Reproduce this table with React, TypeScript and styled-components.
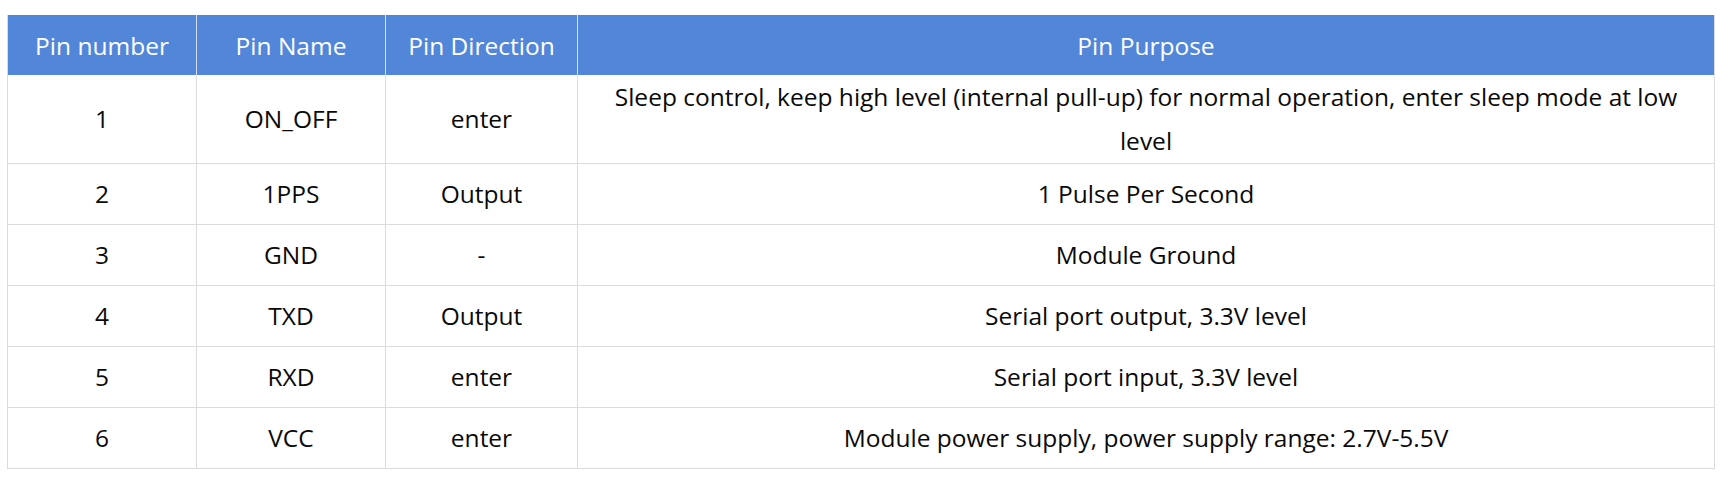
import React from "react";
import styled, { createGlobalStyle } from "styled-components";

const Global = createGlobalStyle`
  html, body { margin: 0; padding: 0; background: #ffffff; }
  body { font-family: "Open Sans", "Noto Sans", "Liberation Sans", sans-serif; }
`;

const Page = styled.div`
  padding: 15px 13px 19px 7px;
`;

const Table = styled.div`
  display: grid;
  grid-template-columns: 188px 189px 192px 1fr;
  border-left: 1px solid #dcdcdc;
  border-right: 1px solid #dcdcdc;
  font-size: 24.5px;
  color: #0a0a0a;
`;

const HeadCell = styled.div<{ first?: boolean }>`
  background: #5286d9;
  color: #ffffff;
  height: 60px;
  display: flex;
  align-items: center;
  justify-content: center;
  text-align: center;
  border-left: ${(p) => (p.first ? "none" : "1px solid #d6def0")};
`;

const Cell = styled.div<{ first?: boolean; wide?: boolean }>`
  min-height: 60px;
  line-height: 44px;
  display: flex;
  align-items: center;
  justify-content: center;
  text-align: center;
  padding: 0 ${(p) => (p.wide ? "20px" : "4px")};
  border-bottom: 1px solid #dcdcdc;
  border-left: ${(p) => (p.first ? "none" : "1px solid #dcdcdc")};
`;

const rows = [
  ["1", "ON_OFF", "enter", "Sleep control, keep high level (internal pull-up) for normal operation, enter sleep mode at low level"],
  ["2", "1PPS", "Output", "1 Pulse Per Second"],
  ["3", "GND", "-", "Module Ground"],
  ["4", "TXD", "Output", "Serial port output, 3.3V level"],
  ["5", "RXD", "enter", "Serial port input, 3.3V level"],
  ["6", "VCC", "enter", "Module power supply, power supply range: 2.7V-5.5V"],
];

const headers = ["Pin number", "Pin Name", "Pin Direction", "Pin Purpose"];

export default function App() {
  return (
    <Page>
      <Global />
      <Table>
        {headers.map((h, i) => (
          <HeadCell key={h} first={i === 0}>
            {h}
          </HeadCell>
        ))}
        {rows.map((r) =>
          r.map((c, i) => (
            <Cell key={r[0] + "-" + i} first={i === 0} wide={i === 3}>
              {c}
            </Cell>
          ))
        )}
      </Table>
    </Page>
  );
}
